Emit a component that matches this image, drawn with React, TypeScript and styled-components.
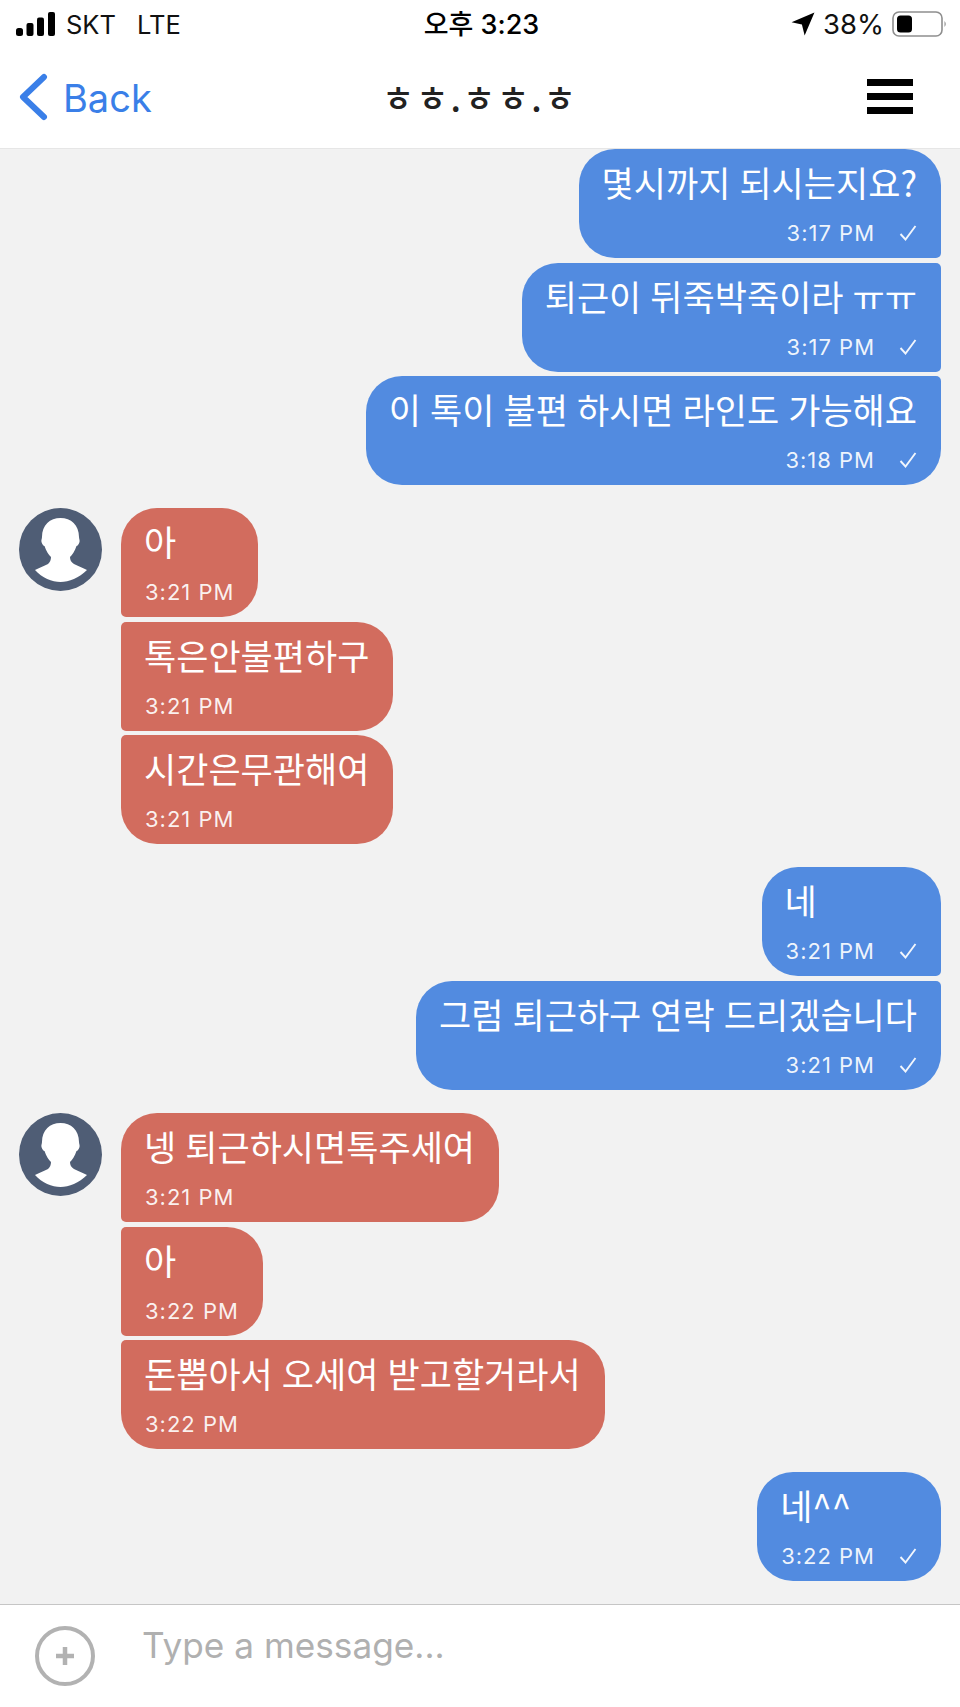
import React from 'react'
import styled, { createGlobalStyle } from 'styled-components'

const GlobalStyle = createGlobalStyle`
  html, body {
    margin: 0;
    padding: 0;
    background: #fff;
  }
  * {
    box-sizing: border-box;
  }
`

const KR = `"Noto Sans CJK KR", "Inter", sans-serif`
const LATIN = `"Inter", "Noto Sans CJK KR", sans-serif`

const Page = styled.div`
  width: 960px;
  height: 1707px;
  display: flex;
  flex-direction: column;
  overflow: hidden;
  background: #fff;
`

const StatusBar = styled.div`
  height: 48px;
  padding: 0 13px 0 16px;
  display: grid;
  grid-template-columns: 1fr auto 1fr;
  align-items: center;
  font-family: ${LATIN};
  font-size: 25.5px;
  color: #111;
`

const StatusLeft = styled.div`
  display: flex;
  align-items: center;
  gap: 10px;
`

const Carrier = styled.span`
  margin-right: 11px;
`

const StatusClock = styled.div`
  font-weight: 500;
  font-size: 27px;
  margin-bottom: 4px;
  color: #000;
`

const BatteryLevel = styled.span`
  font-size: 27.5px;
`

const StatusRight = styled.div`
  display: flex;
  align-items: center;
  justify-content: flex-end;
  gap: 8px;
`

const NavBar = styled.div`
  height: 101px;
  padding: 0 19px 3px;
  display: grid;
  grid-template-columns: 1fr auto 1fr;
  align-items: center;
  border-bottom: 1px solid #e6e6e6;
`

const BackLink = styled.div`
  display: flex;
  align-items: center;
  gap: 14px;
  font-family: ${LATIN};
  font-size: 38px;
  color: #3a7fe8;
`

const BackLabel = styled.span`
  margin-top: 2px;
`

const NavTitle = styled.div`
  font-family: ${KR};
  font-weight: 500;
  font-size: 35px;
  letter-spacing: 2px;
  color: #222;
`

const Burger = styled.div`
  justify-self: end;
  margin-right: 28px;
  width: 46px;
  height: 35px;
  display: flex;
  flex-direction: column;
  justify-content: space-between;
`

const BurgerBar = styled.span`
  display: block;
  height: 7px;
  background: #000;
`

const Thread = styled.div`
  flex: 1;
  min-height: 0;
  background: #f2f2f2;
  padding: 0 19px;
  display: flex;
  flex-direction: column;
`

const Group = styled.div<{ $mine?: boolean }>`
  display: flex;
  gap: 19px;
  justify-content: ${(p) => (p.$mine ? 'flex-end' : 'flex-start')};
  margin-bottom: 23.2px;
`

const Avatar = styled.div`
  width: 83px;
  height: 83px;
  flex: none;
`

const Stack = styled.div<{ $mine?: boolean }>`
  display: flex;
  flex-direction: column;
  gap: 4.5px;
  align-items: ${(p) => (p.$mine ? 'flex-end' : 'flex-start')};
`

const LARGE = 36
const SMALL = 5

const Bubble = styled.div<{ $mine?: boolean; $first: boolean; $last: boolean }>`
  height: 109px;
  padding: 11px 24px 0;
  display: flex;
  flex-direction: column;
  color: #fff;
  background: ${(p) => (p.$mine ? '#528be0' : '#d26c5e')};
  border-radius: ${(p) =>
    p.$mine
      ? `${LARGE}px ${p.$first ? LARGE : SMALL}px ${p.$last ? LARGE : SMALL}px ${LARGE}px`
      : `${p.$first ? LARGE : SMALL}px ${LARGE}px ${LARGE}px ${p.$last ? LARGE : SMALL}px`};
`

const BubbleText = styled.div`
  font-family: ${KR};
  font-weight: 400;
  font-size: 35px;
  line-height: 44px;
  word-spacing: 1.2px;
  white-space: nowrap;
  margin-left: -1px;
`

const Meta = styled.div<{ $mine?: boolean }>`
  margin-top: 15px;
  display: flex;
  align-items: center;
  justify-content: ${(p) => (p.$mine ? 'flex-end' : 'flex-start')};
  gap: 24px;
  font-family: ${LATIN};
  font-size: 22px;
  line-height: 28px;
  letter-spacing: 1px;
  color: rgba(255, 255, 255, 0.92);
`

const Composer = styled.div`
  flex: none;
  height: 103px;
  border-top: 1px solid #c6c6c6;
  padding: 0 0 0 35px;
  display: flex;
  align-items: center;
  gap: 47px;
`

const Placeholder = styled.div`
  font-family: ${LATIN};
  font-size: 35.2px;
  color: #b0b0b0;
  margin-bottom: 22px;
`

const SignalIcon = () => (
  <svg width="40" height="26" viewBox="0 0 40 26">
    <rect x="0" y="17" width="7" height="8" rx="2.5" fill="#000" />
    <rect x="10.5" y="12" width="7" height="13" rx="2" fill="#000" />
    <rect x="21" y="6.5" width="7" height="18.5" rx="2" fill="#000" />
    <rect x="32" y="1" width="7" height="24" rx="2" fill="#000" />
  </svg>
)

const LocationIcon = () => (
  <svg width="24" height="24" viewBox="0 0 22 22">
    <path d="M21.5 0.5 L12.5 21.5 L10 11.5 L0.5 9.5 Z" fill="#000" />
  </svg>
)

const BatteryIcon = () => (
  <svg width="55" height="26" viewBox="0 0 55 26">
    <rect x="1" y="1" width="49" height="24" rx="6" fill="none" stroke="#8e8e8e" strokeWidth="1.6" />
    <rect x="5" y="4.5" width="15" height="17" rx="3.5" fill="#000" />
    <path d="M52.5 10 Q55 13 52.5 16 Z" fill="#8e8e8e" />
  </svg>
)

const ChevronIcon = () => (
  <svg width="30" height="48" viewBox="0 0 30 48">
    <path d="M25 4 L4 24 L25 44" fill="none" stroke="#3a7fe8" strokeWidth="6" strokeLinecap="round" strokeLinejoin="round" />
  </svg>
)

const CheckIcon = () => (
  <svg width="18" height="16" viewBox="0 0 18 16">
    <path d="M1.5 9 L6.5 14.5 L16.5 1" fill="none" stroke="rgba(255,255,255,0.92)" strokeWidth="1.9" />
  </svg>
)

const PersonIcon = () => (
  <svg width="83" height="83" viewBox="0 0 83 83">
    <circle cx="41.5" cy="41.5" r="41.5" fill="#4f5d75" />
    <path
      d="M41.5 10 C52 10 60 17 60 29 C60 31 61 32 60.5 34 C60 36 58.5 38 57.5 38 C56 43 53 47 51 49 C51 52 52 54 55 56 C59 58 64 60 68 62 C60 70 50 74 41.5 74 C33 74 23 70 16 62 C20 60 25 58 29 56 C31 54 32 52 32 49 C30 47 27 43 25.5 38 C24.5 38 23 36 22.5 34 C22 32 23 31 23 29 C23 17 31 10 41.5 10 Z"
      fill="#fff"
    />
  </svg>
)

const PlusIcon = () => (
  <svg width="60" height="60" viewBox="0 0 60 60">
    <circle cx="30" cy="30" r="28" fill="none" stroke="#b2b2b2" strokeWidth="4" />
    <path d="M30 21 V39 M21 30 H39" fill="none" stroke="#b2b2b2" strokeWidth="4.5" />
  </svg>
)

interface Message {
  text: string
  time: string
}

interface GroupData {
  mine: boolean
  messages: Message[]
}

const groups: GroupData[] = [
  {
    mine: true,
    messages: [
      { text: '몇시까지 되시는지요?', time: '3:17 PM' },
      { text: '퇴근이 뒤죽박죽이라 ㅠㅠ', time: '3:17 PM' },
      { text: '이 톡이 불편 하시면 라인도 가능해요', time: '3:18 PM' },
    ],
  },
  {
    mine: false,
    messages: [
      { text: '아', time: '3:21 PM' },
      { text: '톡은안불편하구', time: '3:21 PM' },
      { text: '시간은무관해여', time: '3:21 PM' },
    ],
  },
  {
    mine: true,
    messages: [
      { text: '네', time: '3:21 PM' },
      { text: '그럼 퇴근하구 연락 드리겠습니다', time: '3:21 PM' },
    ],
  },
  {
    mine: false,
    messages: [
      { text: '넹 퇴근하시면톡주세여', time: '3:21 PM' },
      { text: '아', time: '3:22 PM' },
      { text: '돈뽑아서 오세여 받고할거라서', time: '3:22 PM' },
    ],
  },
  {
    mine: true,
    messages: [{ text: '네^^', time: '3:22 PM' }],
  },
]

export default function App() {
  return (
    <Page>
      <GlobalStyle />
      <StatusBar>
        <StatusLeft>
          <SignalIcon />
          <Carrier>SKT</Carrier>
          <span>LTE</span>
        </StatusLeft>
        <StatusClock>오후 3:23</StatusClock>
        <StatusRight>
          <LocationIcon />
          <BatteryLevel>38%</BatteryLevel>
          <BatteryIcon />
        </StatusRight>
      </StatusBar>
      <NavBar>
        <BackLink>
          <ChevronIcon />
          <BackLabel>Back</BackLabel>
        </BackLink>
        <NavTitle>ㅎㅎ.ㅎㅎ.ㅎ</NavTitle>
        <Burger>
          <BurgerBar />
          <BurgerBar />
          <BurgerBar />
        </Burger>
      </NavBar>
      <Thread>
        {groups.map((group, i) => (
          <Group key={i} $mine={group.mine}>
            {!group.mine && (
              <Avatar>
                <PersonIcon />
              </Avatar>
            )}
            <Stack $mine={group.mine}>
              {group.messages.map((m, j) => (
                <Bubble
                  key={j}
                  $mine={group.mine}
                  $first={j === 0}
                  $last={j === group.messages.length - 1}
                >
                  <BubbleText>{m.text}</BubbleText>
                  <Meta $mine={group.mine}>
                    <span>{m.time}</span>
                    {group.mine && <CheckIcon />}
                  </Meta>
                </Bubble>
              ))}
            </Stack>
          </Group>
        ))}
      </Thread>
      <Composer>
        <PlusIcon />
        <Placeholder>Type a message...</Placeholder>
      </Composer>
    </Page>
  )
}
